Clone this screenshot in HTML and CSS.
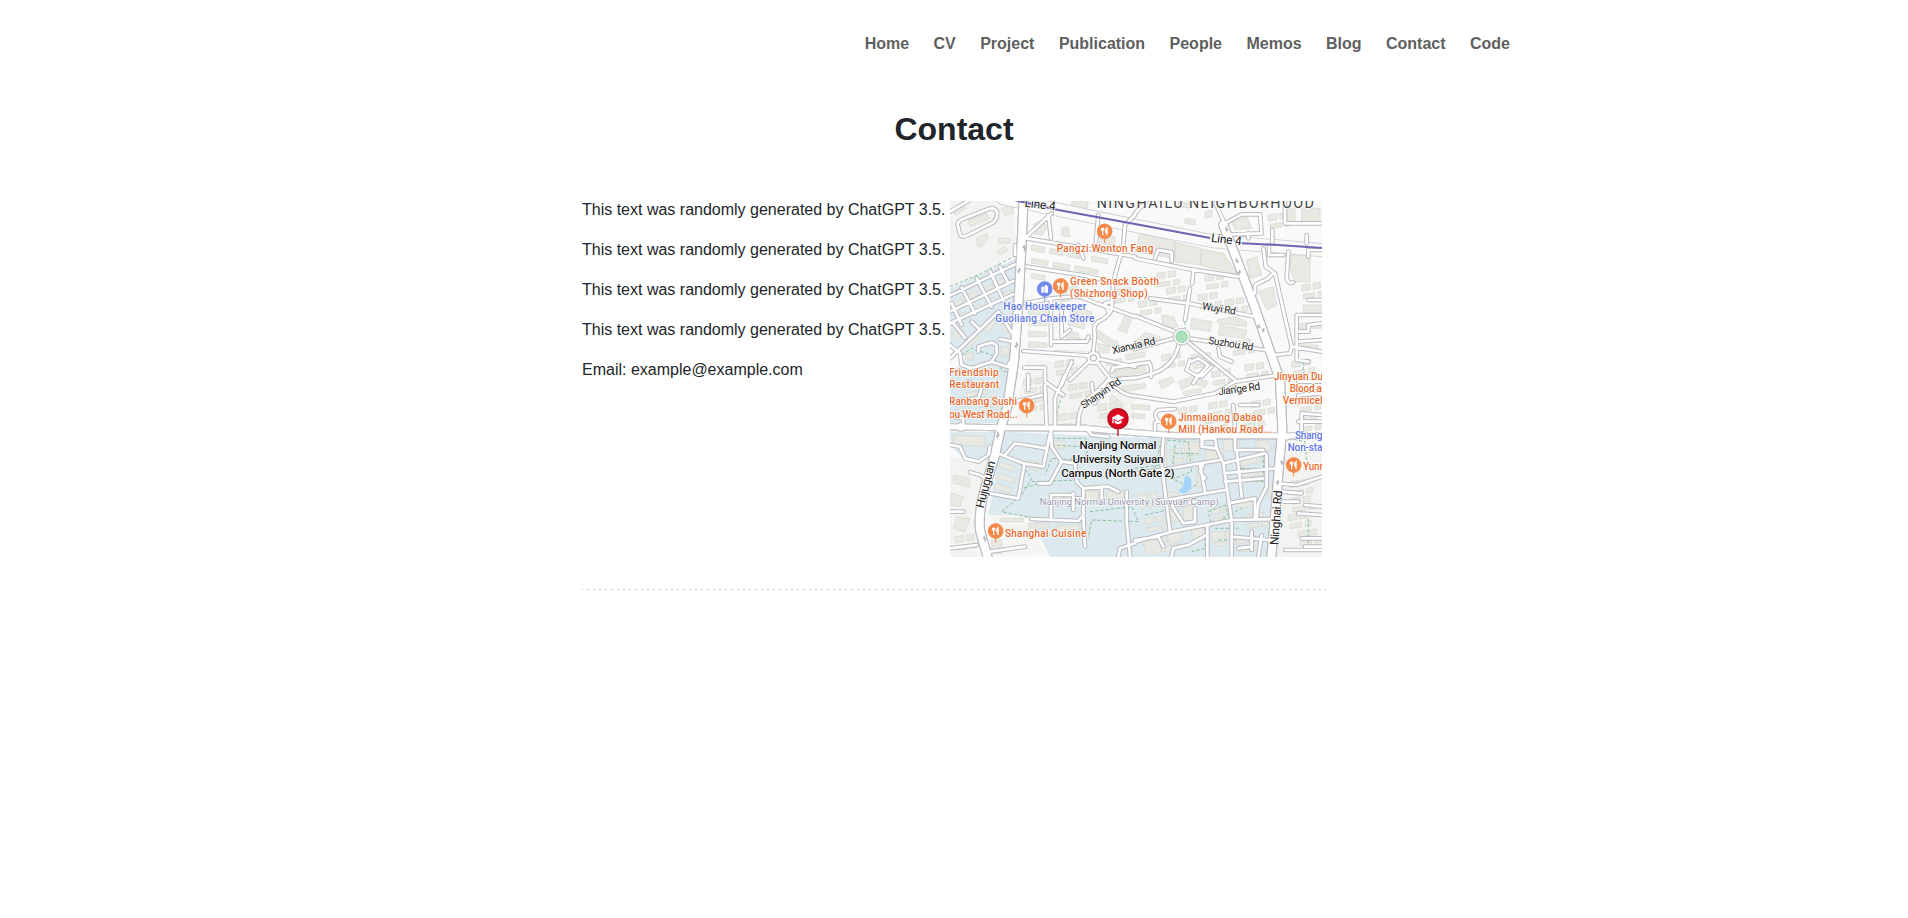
FILE: index.html
```
<!DOCTYPE html>
<html lang="en">
<head>
<meta charset="utf-8">
<title>Contact</title>
<link rel="stylesheet" href="styles.css">
</head>
<body>
<nav class="nav"><a>Home</a><a>CV</a><a>Project</a><a>Publication</a><a>People</a><a>Memos</a><a>Blog</a><a>Contact</a><a>Code</a></nav>
<main class="page">
<h1 class="title">Contact</h1>
<section class="contact">
<div class="copy">
<p>This text was randomly generated by ChatGPT 3.5.</p>
<p>This text was randomly generated by ChatGPT 3.5.</p>
<p>This text was randomly generated by ChatGPT 3.5.</p>
<p>This text was randomly generated by ChatGPT 3.5.</p>
<p>Email: example@example.com</p>
</div>
<svg class="map" viewBox="15 18 1116 1068" role="img" aria-label="Campus map">
<defs>
<g id="minor">
<path d="M455 500L490 545Q520 600 570 603M490 555L570 548M500 530L505 518L612 502Q622 520 618 545M450 625L485 558M640 678Q622 660 640 645L690 642"/>
<path d="M45 118L38 88Q40 76 60 70L130 42Q150 36 156 52Q158 70 145 82L70 120Q50 130 45 118ZM70 18L15 50M245 130L570 185M245 215L420 242L520 265M240 325L320 310L400 303L455 325L500 340M235 468L430 482M540 90L535 150L505 260L500 340Q495 360 470 375Q440 385 450 420L445 470M462 492L570 515M432 500L375 555M318 315V450M318 440H425L430 425M350 330V425L375 405M460 60L452 148M310 60L318 130M245 125L320 55M415 190L400 150M540 90L570 60M500 340L570 365M490 350L480 325L500 320M210 180V150M238 518H300V555"/>
<path d="M15 302L210 208M15 350L205 258M15 385L205 298M20 325L50 390M50 278L90 355M95 250L140 335M135 228L175 315M165 215L190 265M15 490L135 375L160 350L205 420V440L165 432M25 385L60 428M80 380L105 405M15 450L45 475L50 510L80 520L140 500L155 475V455Q150 440 130 445L100 455V470M190 510L215 470M140 500L200 520"/>
<g transform="translate(570 0)"><path d="M0 190L150 220L310 245M0 362L120 410M45 310L160 325L360 365M175 225L172 265M165 280L150 375M160 430L390 465M118 430L0 462M132 448Q115 515 55 535L0 550M158 440L300 555M242 25L275 100M270 85L320 58L375 58L380 115L290 118M340 115V130M385 160L392 215L420 235L470 455L465 475L418 480M415 235L400 250L360 270V295L345 300M402 150V180H445M460 170L455 250Q460 268 475 262M450 18V85H561M450 85V20M412 145V105M515 145V120M520 185V165H561M520 315H561M561 360H485V495L520 500M485 410H520V390L561 385M470 455L561 470M485 440L561 435M60 190L70 165L110 172V198M0 55L35 18M165 495L155 525L190 545L220 510L190 490L170 500M250 460L255 485L290 500M200 545L230 515"/></g>
<g transform="translate(0 540)"><path d="M15 210L45 215L60 250L100 260L130 240L135 215M15 155H140M55 155V130L15 125M165 238L235 265L295 275L315 175M180 240L210 205L305 220M238 268L220 370L135 355M318 165L320 215L350 260L390 265L395 320L415 340L490 335L520 350M350 260L315 325H280M415 340L415 425L420 515M258 432L400 438L415 420V370H385V355M318 435V360H385V405M470 335V370M545 350V440L555 545M75 292L105 300L120 310M15 410H55M15 520L95 510M135 530L240 515M205 0L190 60M330 155V70L360 0M300 30L305 155M290 60L210 80M355 60L300 20M400 150Q400 85 445 60L490 15M420 155L440 180L490 185M445 60L440 25M15 80L100 70L110 40L70 20M520 545L525 520L570 505M380 -40L350 30M250 0V45"/></g>
<g transform="translate(570 540)"><path d="M0 63L115 80L240 55L300 20L430 0M295 90L300 160M315 90H370M60 165V145Q65 135 90 145M200 190V215L245 220L265 265L290 435V545M200 215L205 190H240L245 220M85 190L80 265L105 470M0 295L95 282L255 255M195 270L210 350M210 310L195 290L205 265M95 375L270 345M300 190V225H385M305 225L320 365M265 265L390 235M268 295L420 280M270 320L385 310M395 240V335L370 385L365 430M280 385L360 370V430M0 500L110 470L290 435L430 432M80 375L140 390L180 380M110 390L145 445L180 440V400M0 495L70 485L85 515M110 545L115 520L160 510L215 480M217 450V545M290 485L400 495M350 470V525M310 520L350 515M430 325L485 330L561 305M440 350L500 355M445 380H490M455 190L500 170V115L561 120M490 140H561M490 85V60L561 55M490 20H561M490 415L561 420M510 390L561 395M500 490H561M510 515H561M450 525H561M190 0L175 25M380 480L370 545"/></g>
</g>
<g id="major">
<path class="w20" d="M236 0L232 100L222 300L207 500L186 640L167 700L150 780L120 880Q98 960 106 1010L130 1095"/>
<path class="w13" d="M0 695L170 698L420 700L570 713L700 722H1140"/>
<path class="w20" d="M835 90L878 200L925 325L965 440L1005 555L1012 700L1003 800L988 990L978 1095"/>
<path class="w12" d="M445 474A15 15 0 1 0 446 474M47 688A8 8 0 1 0 48 688"/>
</g>
<g id="fork"><path d="M0 -3V35"/><circle r="22"/><path class="icon" d="M-9 -10V-4Q-6 1 -3 -4V-10M-6 -10V12M7 12V-10Q2 -6 3 2H7"/></g>
<g id="blocks">
<path d="M0 0l26-4v18l-26 4zM34-5l22-3v17l-22 3zM5 28l35-5v13l-35 5zM50 20l18-3v15l-18 3z"/>
</g>
</defs>
<rect class="land" x="15" y="18" width="1116" height="1068"/>
<path class="ground" d="M15 18H205L215 180L15 280ZM15 790L140 800L95 1086H15ZM245 490L570 525V690H210ZM985 760H1131V1086H970Z"/>
<path class="campus" d="M15 280L215 190L215 300L185 600L155 685H15V540L65 490L15 450ZM15 710H155L140 800L50 785L15 750ZM170 710L570 728H1000L975 1086H315L260 970L130 960L150 850ZM545 880L575 950L620 1000L600 1086H525ZM430 875L550 890V1086H350L425 1030Z"/>
<path class="open" d="M140 960H230L300 1075L150 1086Z"/>
<g class="building">
<path d="M265 88L290 75L307 95L292 120L268 117ZM25 45L45 30L65 40L30 60ZM70 75L125 55L135 70L75 96ZM95 130L125 115L130 130L110 155L98 153ZM160 130H195V145H160ZM155 170L175 155L190 165L165 180ZM170 40L205 28V55L180 60ZM380 20H430L425 50L380 40ZM465 120L510 125V150L465 145ZM350 100L370 95L375 125L350 122Z"/>
<path d="M20 325L50 310L57 322L27 338ZM65 302L95 285L100 300L72 315ZM110 280L140 266L145 278L116 292ZM155 258L188 242L193 256L161 270ZM30 365L60 350L65 362L36 376ZM75 342L104 328L110 340L80 354ZM118 322L150 307L155 319L124 333ZM165 300L200 283V298L171 313ZM20 415L45 398L60 413L35 435ZM55 445L95 415L105 428L68 460ZM115 400L145 370L155 385L125 415ZM60 475H85V495H60ZM165 460L190 455L195 478L170 485ZM170 390L190 385L195 410L180 415Z"/>
<path d="M260 150L300 158L298 173L259 166ZM315 160L355 167L353 182L314 175ZM370 170L405 176L403 191L369 185ZM260 190L310 199L307 212L260 205ZM325 202L375 210L372 224L324 216ZM390 212L460 225L458 238L389 226ZM440 184L490 193L487 206L439 198ZM260 235L300 242V255L260 250ZM250 345L305 348V360H250ZM250 375L305 378V392H250ZM250 408L305 412V425H250ZM250 440L305 444V457H250ZM375 335L440 350L437 367L375 352ZM370 375L420 388L417 402L370 390ZM365 410L400 415V430H365ZM540 360L560 370L545 415L520 405ZM325 465L425 470M460 445L495 455L490 475L460 470ZM440 420L460 405L500 435L520 440L515 452L490 452ZM570 440L600 412L645 425L650 438L600 448Z"/>
<path d="M585 115L690 140V190L570 170ZM692 142L768 160V210L690 200ZM770 162L835 175L880 240L766 210ZM720 70L750 75V90L720 85ZM700 20L735 25V40L700 35ZM780 50L800 45V65L780 68ZM905 195L935 185L950 240L915 250ZM940 290L985 275L995 330L965 345ZM1035 180H1095V260H1050L1038 230ZM1020 40H1050V80H1020ZM1070 40H1125V80H1070ZM860 80L905 65L920 100L870 105ZM1075 330H1131V355H1075ZM1060 385H1131V400H1060ZM1060 450H1120V465H1060ZM740 370L800 380L795 410L735 400ZM825 390L905 405L900 430L820 420ZM815 375L870 365L905 380V395L820 385ZM650 360L685 365L700 395L655 405Z"/>
<path d="M508 528L600 512L603 530L512 546ZM530 575L600 565L603 578L540 590ZM640 560L680 545L690 560L650 580ZM700 560L740 545L790 560L780 578L745 565L710 585ZM480 500L530 490V503L485 513ZM540 480L600 470V485L545 495ZM500 600L535 625L530 640L495 618ZM560 628L615 632V645L560 641ZM560 655L600 658V671L560 668ZM715 590L770 580V592L718 602Z"/>
</g>
<g class="building">
<use href="#blocks" x="635" y="235"/><use href="#blocks" x="665" y="280"/><use href="#blocks" x="780" y="242"/><use href="#blocks" x="580" y="320"/><use href="#blocks" x="740" y="480"/><use href="#blocks" x="900" y="510"/><use href="#blocks" x="700" y="640"/><use href="#blocks" x="790" y="625"/><use href="#blocks" x="460" y="630"/><use href="#blocks" x="370" y="570"/><use href="#blocks" x="235" y="555"/><use href="#blocks" x="235" y="610"/><use href="#blocks" x="890" y="660"/><use href="#blocks" x="780" y="670"/><use href="#blocks" x="650" y="480"/><use href="#blocks" x="1040" y="500"/><use href="#blocks" x="920" y="620"/><use href="#blocks" x="340" y="660"/><use href="#blocks" x="1060" y="610"/><use href="#blocks" x="1040" y="910"/><use href="#blocks" x="1060" y="1010"/><use href="#blocks" x="1030" y="960"/><use href="#blocks" x="675" y="765"/><use href="#blocks" x="600" y="970"/><use href="#blocks" x="875" y="1030"/><use href="#blocks" x="805" y="1015"/><use href="#blocks" x="800" y="940"/><use href="#blocks" x="340" y="280"/><use href="#blocks" x="1070" y="270"/><use href="#blocks" x="30" y="1025"/>
<use href="#blocks" x="330" y="500"/><use href="#blocks" x="800" y="530"/><use href="#blocks" x="860" y="440"/><use href="#blocks" x="760" y="300"/><use href="#blocks" x="840" y="315"/><use href="#blocks" x="500" y="285"/><use href="#blocks" x="60" y="565"/><use href="#blocks" x="100" y="610"/><use href="#blocks" x="1060" y="670"/><use href="#blocks" x="1035" y="860"/><use href="#blocks" x="640" y="1030"/><use href="#blocks" x="580" y="900"/><use href="#blocks" x="900" y="960"/><use href="#blocks" x="970" y="60"/>
<path d="M25 720L120 725V755L25 750ZM165 800L210 815L205 830L160 815ZM160 835L210 850L205 865L155 850ZM150 865L200 880L195 895L145 880ZM250 795L285 805L275 830L250 820ZM320 735L360 740V760H320ZM25 840L75 850V875L25 865ZM20 895L55 905L45 935L15 930ZM35 965L75 970L60 1010L25 1000ZM165 970H235V980H165ZM250 985H310V1000H250ZM335 990H405V1010H335ZM420 885L460 890V915H420ZM485 890L535 885L540 905L485 915ZM325 910L380 905V930H325ZM140 1035H170V1075H140ZM640 740L665 735V820L645 825ZM715 740H765V780H720ZM755 800H770V875H755ZM780 770L835 760V800L780 810ZM835 735L885 730L880 775L835 765ZM875 790L950 775V800L880 815ZM890 825L955 820V840L890 850ZM930 740L970 735L980 765L940 775ZM660 895L700 890V980H680ZM715 910L745 930V975L715 985ZM800 1010H840V1040H800ZM875 915L925 910V935L880 940ZM970 870H990V910H970ZM665 1020L705 1010L715 1035L675 1050ZM740 1000H785V1030H740ZM590 1040L640 1025L650 1075L610 1080Z"/>
</g>
<path class="park" d="M15 275L110 235L215 180M480 88L530 95L535 115M400 433H440M50 480L80 460L140 480L175 530H210M450 60L550 90M350 600L330 680M570 820L650 810M320 730H420L435 750L415 795L320 790L300 840M230 810L260 850L230 900L170 950L270 970M260 860L400 855M325 855L230 880M320 750L410 755M435 950L560 935L580 980L440 975L430 1030M650 735L630 820L690 850L740 830L730 740L660 735M690 750L680 850L740 880L760 860M890 790L955 780V860H890M790 950L840 930L850 960L800 995L790 950M870 950L890 940M810 1000H880M820 1035H870M740 1000L780 990V1060L740 1070M1075 500V540M1030 730L1080 740L1085 800M1100 540H1131M600 960L690 940M690 775H760M890 820H960M720 380V410M580 248H610M1090 970V1060"/>
<path class="pond" d="M718 850Q723 833 737 852Q747 877 724 893Q710 900 701 885Q718 880 718 850Z"/>
<path class="casing w40" d="M175 10L570 92L800 138L1140 166"/><path class="surface w34" d="M175 10L570 92L800 138L1140 166"/>
<use href="#minor" class="casing w12"/><use href="#major" class="casing wide"/>
<use href="#minor" class="surface w7"/><use href="#major" class="surface"/>
<path class="metro" d="M195 12L340 45L570 87L795 129M890 145L1000 150L1140 160"/>
<circle class="round" cx="710" cy="425" r="25"/><circle class="green" cx="710" cy="425" r="18"/>
<path class="arrows" d="M238 170V150l-5 8h10zM222 218V235l-5-8h10zM214 440V460l-5-8h10zM158 710V730l-5-8h10zM119 1040V1022l-5 8h10zM876 205V190l-5 8h10zM883 225V240l-5-8h10zM955 400V412l-5-8h10zM942 400V388l-5 8h10zM845 110V95l-5 8h10zM1011 810V795l-5 8h10zM998 855V870l-5-8h10z"/>
<g class="pin">
<use href="#fork" x="479" y="109"/><use href="#fork" x="347" y="273"/><use href="#fork" x="245" y="632"/><use href="#fork" x="152" y="1008"/><use href="#fork" x="671" y="679"/><use href="#fork" x="1046" y="810"/>
</g>
<g class="shop" transform="translate(299 282)"><path d="M0 0V35"/><circle r="22"/><path class="bag" d="M-10-5L-3-9V11H-10ZM-1-8H10V11H-1ZM1-8V-12H7V-8"/></g>
<g class="school" transform="translate(519 671)"><path d="M0 20V52"/><circle r="30"/><path class="cap" d="M-19-3L0-13L19-3L0 7ZM-10 4V13Q0 20 11 13V4L0 10ZM-17-2H-13V14H-17Z"/></g>
<g class="label food">
<text x="335" y="171" textLength="290">Pangzi Wonton Fang</text>
<text x="375" y="271" textLength="267">Green Snack Booth</text><text x="375" y="307" textLength="233">(Shizhong Shop)</text>
<text x="12" y="542" textLength="149">Friendship</text><text x="13" y="578" textLength="149">Restaurant</text>
<text x="12" y="631" textLength="204">Ranbang Sushi</text><text x="12" y="668" textLength="206">ou West Road...</text>
<text x="180" y="1026" textLength="244">Shanghai Cuisine</text>
<text x="700" y="678" textLength="252">Jinmailong Dabao</text><text x="700" y="715" textLength="282">Mill (Hankou Road...</text>
<text x="987" y="555" textLength="147">Jinyuan Du</text><text x="1034" y="591" textLength="97">Blood a</text><text x="1013" y="628" textLength="120">Vermicel</text><text x="1074" y="826" textLength="66">Yunn</text>
</g>
<g class="label store"><text x="175" y="344" textLength="249">Hao Housekeeper</text><text x="151" y="380" textLength="297">Guoliang Chain Store</text><text x="1050" y="733" textLength="82">Shang</text><text x="1028" y="768" textLength="104">Non-sta</text></g>
<text class="label uni" x="284" y="931" textLength="537">Nanjing Normal University (Suiyuan Camp)</text>
<g class="label roads">
<text transform="translate(238 35) rotate(7)" class="line" textLength="93">Line 4</text>
<text transform="translate(797 140) rotate(7)" class="line" textLength="92">Line 4</text>
<text transform="translate(770 343) rotate(9)" textLength="102">Wuyi Rd</text>
<text transform="translate(789 446) rotate(9)" textLength="136">Suzhou Rd</text>
<text transform="translate(504 477) rotate(-13)" textLength="132">Xianxia Rd</text>
<text transform="translate(416 642) rotate(-34)" textLength="138">Shanyin Rd</text>
<text transform="translate(821 601) rotate(-8)" textLength="127">Jian'ge Rd</text>
<text transform="translate(116 941) rotate(-76)" class="line" textLength="144">Hujuguan</text>
<text transform="translate(1000 1051) rotate(-86)" class="line" textLength="164">Ninghai Rd</text>
</g>
<text class="label area" x="455" y="38" textLength="652">NINGHAILU NEIGHBORHOOD</text>
<g class="label campus-name"><text x="519" y="763" textLength="231">Nanjing Normal</text><text x="519" y="805" textLength="273">University Suiyuan</text><text x="519" y="846" textLength="340">Campus (North Gate 2)</text></g>
</svg>
</section>
<div class="divider"></div>
</main>
</body>
</html>
```
FILE: styles.css
```
body { margin: 0; background: #fff; color: #212529; font: 16px/24px "Liberation Sans", Arial, sans-serif; }
.nav { display: flex; justify-content: flex-end; gap: 24.45px; width: 1140px; margin: 0 auto; padding: 32px 14px 0 0; box-sizing: border-box; color: #5f5f5f; font-weight: 700; }
.page { width: 744px; margin: 0 auto; }
.title { margin: 54px 0 0; font-size: 32px; line-height: 38px; text-align: center; }
.contact { display: flex; justify-content: space-between; width: 740px; margin-top: 50px; padding-top: 3px; }
.copy { margin-top: -3px; white-space: nowrap; }
.copy p { margin: 0 0 16px; }
.map { display: block; width: 372px; height: 356px; }
.divider { height: 1px; margin-top: 32px; background: repeating-linear-gradient(90deg, #c8c8c8 0 2px, transparent 2px 6px) -1px 0 / 750px 1px; }

.land { fill: #f8f9f8; }
.ground { fill: #f3f4f1; }
.campus { fill: #dce9ee; }
.open { fill: #f5f6f4; }
.building { fill: #e7e9e2; stroke: #d5d7cf; stroke-width: 2; }
.park { fill: none; stroke: #8abf99; stroke-width: 3; stroke-dasharray: 10 6; }
.pond { fill: #a5d4fb; }
.casing { fill: none; stroke: #babbc1; stroke-linejoin: round; stroke-linecap: round; }
.surface { fill: none; stroke: #fff; stroke-linejoin: round; stroke-linecap: round; }
.w40 { stroke-width: 42px; stroke: #cbccd0; }
.w34 { stroke-width: 37px; stroke: #fafafa; }
.w12 { stroke-width: 14px; }
.w7 { stroke-width: 8px; }
#major .w20 { stroke-width: 24px; }
#major .w13 { stroke-width: 15px; }
#major .w12 { stroke-width: 7px; }
.wide { filter: drop-shadow(2px 0 0 #babbc1) drop-shadow(-2px 0 0 #babbc1) drop-shadow(0 2px 0 #babbc1) drop-shadow(0 -2px 0 #babbc1); }
.metro { fill: none; stroke: #7061b3; stroke-width: 6; }
.round { fill: #fff; stroke: #babbc1; stroke-width: 3; }
.green { fill: #a9dfba; stroke: #8fc5a2; stroke-width: 2; }
.arrows { fill: #aeb1b5; stroke: #aeb1b5; stroke-width: 2; }
.pin { fill: #f58949; stroke: #f58949; stroke-width: 3; }
.icon { fill: none; stroke: #fff; stroke-width: 4; }
.shop { fill: #7189ed; stroke: #7189ed; stroke-width: 3; }
.bag { fill: #fff; stroke: none; }
.school { fill: #dc0822; stroke: #b30b20; stroke-width: 4; }
.cap { fill: #fff; stroke: none; }
.label { font-family: Roboto, sans-serif; font-size: 30px; font-weight: 500; stroke: #fff; stroke-width: 4px; stroke-linejoin: round; paint-order: stroke; }
.food { fill: #e9682b; }
.store { fill: #5b73e8; }
.uni { fill: #9290a8; font-size: 28px; font-weight: 400; }
.roads { fill: #222; font-size: 31px; font-weight: 400; }
.line { font-size: 36px; }
.area { fill: #444; font-size: 43px; font-weight: 400; }
.campus-name { fill: #111; font-size: 35px; text-anchor: middle; }
```
